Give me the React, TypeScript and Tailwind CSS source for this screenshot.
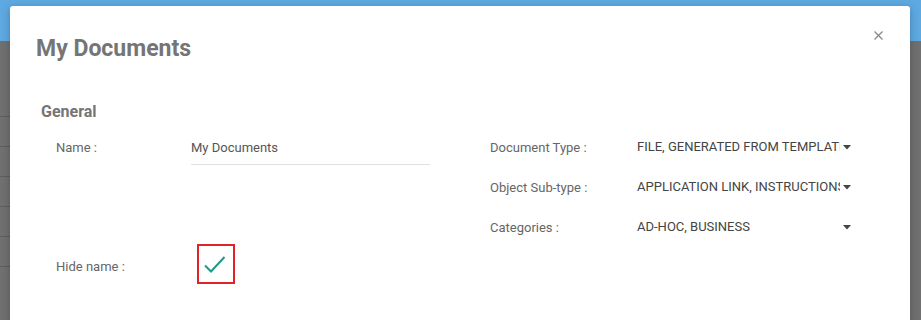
import React from 'react'

const rows = [
  { label: 'Document Type :', value: 'FILE, GENERATED FROM TEMPLATE' },
  { label: 'Object Sub-type :', value: 'APPLICATION LINK, INSTRUCTIONS' },
  { label: 'Categories :', value: 'AD-HOC, BUSINESS' },
]

function Caret() {
  return (
    <svg width="8" height="5" viewBox="0 0 8 5" className="shrink-0">
      <path d="M0 0 L8 0 L4 4.5 Z" fill="#444" />
    </svg>
  )
}

export default function App() {
  return (
    <div className="relative h-[320px] w-[921px] overflow-hidden bg-[#707070] font-['Roboto',sans-serif]">
      {/* app behind the dialog */}
      <div className="h-[41px] bg-[#5ea9e2]" />
      <div className="w-[500px]">
        {[0, 1, 2, 3, 4, 5].map((i) => (
          <div key={i} className={i === 0 ? 'h-[76px] border-b border-[#5e5e5e]' : 'h-[30px] border-b border-[#5e5e5e]'} />
        ))}
      </div>

      {/* dialog */}
      <div className="absolute left-[10px] top-[6px] h-[340px] w-[900px] rounded-t-[3px] bg-white shadow-[0_2px_8px_rgba(0,0,0,0.25)]">
        <button className="absolute right-[27px] top-[25px] p-0">
          <svg width="9" height="9" viewBox="0 0 9 9">
            <path d="M0.5 0.5 L8.5 8.5 M8.5 0.5 L0.5 8.5" stroke="#888" strokeWidth="1.3" />
          </svg>
        </button>

        <h1 className="ml-[26px] mt-[30px] text-[23px] font-bold leading-[26px] text-[#757575]">My Documents</h1>
        <h2 className="ml-[31px] mt-[40px] text-[16px] font-bold leading-[20px] text-[#757575]">General</h2>

        <div className="mt-[16px] flex pl-[46px] text-[13px] leading-[20px]">
          <div className="w-[434px]">
            <div className="flex">
              <span className="w-[135px] text-[#666]">Name :</span>
              <div className="w-[239px] border-b border-[#e0e0e0] pb-[6px] text-[#555]">My Documents</div>
            </div>
            <div className="mt-[79px] flex items-start">
              <span className="mt-[13px] w-[141px] text-[#666]">Hide name :</span>
              <div className="h-[40px] w-[38px] border-2 border-[#e3212b]">
                <svg width="34" height="36" viewBox="0 0 34 36">
                  <path d="M6 19.5 L12 25.5 L25.5 11" fill="none" stroke="#1a9b8b" strokeWidth="2" />
                </svg>
              </div>
            </div>
          </div>

          <div>
            {rows.map((r) => (
              <div key={r.label} className="flex h-[40px] items-start">
                <span className="w-[147px] text-[#666]">{r.label}</span>
                <div className="-mt-[1px] flex items-center">
                  <span className="w-[203px] overflow-hidden whitespace-nowrap text-[13px] text-[#444]">{r.value}</span>
                  <span className="ml-[3px] mt-[1px]">
                    <Caret />
                  </span>
                </div>
              </div>
            ))}
          </div>
        </div>
      </div>
    </div>
  )
}
